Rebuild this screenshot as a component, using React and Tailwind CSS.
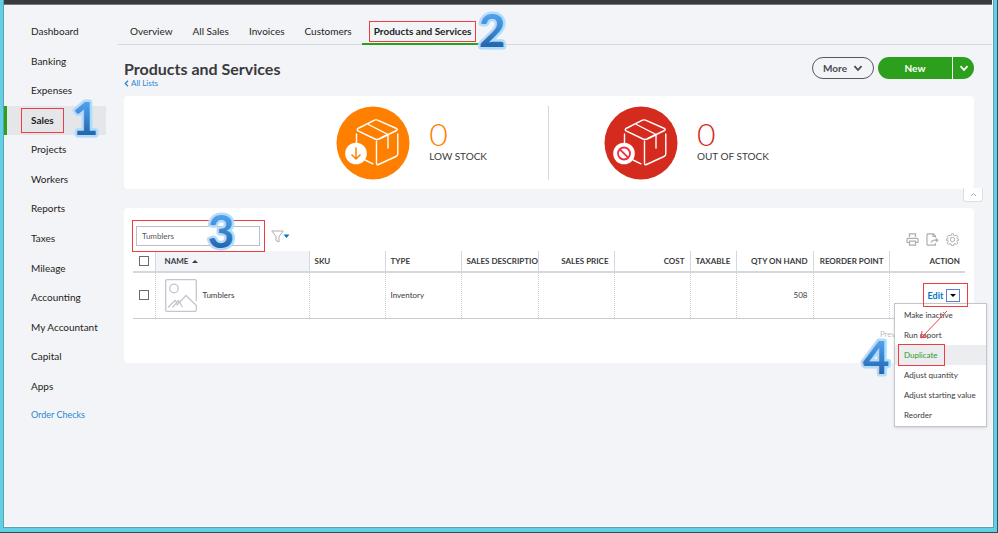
import React from "react";

const navItems = [
  "Dashboard", "Banking", "Expenses", "Sales", "Projects", "Workers", "Reports",
  "Taxes", "Mileage", "Accounting", "My Accountant", "Capital", "Apps",
];

const tabs = ["Overview", "All Sales", "Invoices", "Customers", "Products and Services"];

const columns = [
  { label: "NAME", width: "w-[154px]", align: "text-left", sorted: true },
  { label: "SKU", width: "w-[76px]", align: "text-left" },
  { label: "TYPE", width: "w-[76px]", align: "text-left", value: "Inventory" },
  { label: "SALES DESCRIPTION", width: "w-[77px]", align: "text-left" },
  { label: "SALES PRICE", width: "w-[76px]", align: "text-right" },
  { label: "COST", width: "w-[76px]", align: "text-right" },
  { label: "TAXABLE", width: "w-[46px]", align: "text-left" },
  { label: "QTY ON HAND", width: "w-[77px]", align: "text-right", value: "508" },
  { label: "REORDER POINT", width: "w-[76px]", align: "text-right" },
];

const menuItems = [
  "Make inactive", "Run report", "Duplicate", "Adjust quantity", "Adjust starting value", "Reorder",
];

function Step({ n, className }) {
  const id = "step-fill-" + n;
  return (
    <svg width="40" height="60" viewBox="0 0 40 60" className={"pointer-events-none absolute z-20 " + className}>
      <defs>
        <linearGradient id={id} x1="0" y1="0" x2="0" y2="1">
          <stop offset="0.25" stopColor="#4f9fec" />
          <stop offset="0.8" stopColor="#2467ae" />
        </linearGradient>
      </defs>
      <text
        x="20" y="46" textAnchor="middle" fontSize="46" fontWeight="700"
        fontFamily="Lato, sans-serif" fill={"url(#" + id + ")"}
        stroke="#b3dcfb" strokeWidth="5" strokeLinejoin="round" paintOrder="stroke"
      >
        {n}
      </text>
    </svg>
  );
}

function Mark({ className }) {
  return <span className={"pointer-events-none absolute z-10 border border-[#f23b3f] " + className} />;
}

function Chevron({ className }) {
  return (
    <svg width="10" height="7" viewBox="0 0 10 7" fill="none" stroke="currentColor" strokeWidth="1.8" className={className}>
      <path d="M1.5 1.2 5 5l3.500-3.800" />
    </svg>
  );
}

function StockIcon({ color, kind }) {
  return (
    <svg width="74" height="74" viewBox="0 0 74 74" fill="none" className="shrink-0">
      <circle cx="37" cy="37" r="36.500" fill={color} />
      <g stroke="#fff" strokeWidth="1.400" strokeLinejoin="round" strokeLinecap="round">
        <path d="M22 22.500 38.500 14.200q1.500-.7 3 0L60.500 22.500q1.500 1 0 2L43 33q-2 .8-4 0L22 24.800q-1.500-1-0-2.300Z" />
        <path d="M32.500 18.500 52 28.500v13.500M52 28.500 44 32.500" />
        <path d="M20.500 28v10M40.500 35v22q0 2.500 2 1.500L60 50.500q1.800-.8 1.800-2.500V28M29 54l8 3.800" />
      </g>
      <circle cx="20" cy="47.500" r="10.800" fill="#fff" />
      {kind === "low" ? (
        <path d="M20 41.500v11.500M15.500 48.500 20 53l4.500-4.500" stroke={color} strokeWidth="1.500" />
      ) : (
        <g stroke="#ee2f3f" strokeWidth="1.800">
          <circle cx="20" cy="47.500" r="6" />
          <path d="m15.800 43.300 8.400 8.400" />
        </g>
      )}
    </svg>
  );
}

function Stock({ color, textColor, kind, label }) {
  return (
    <div className="flex items-center gap-[19px]">
      <StockIcon color={color} kind={kind} />
      <div className="flex flex-col pb-[6px]">
        <span className={"text-[32px] leading-8 font-light " + textColor}>0</span>
        <span className="text-[10px] leading-3 text-[#393a3d]">{label}</span>
      </div>
    </div>
  );
}

function Sidebar() {
  return (
    <nav aria-label="Main" className="w-[102px] shrink-0 pt-3 text-[10px] text-[#1d1e20]">
      <ul className="grid h-[384px] auto-rows-fr">
        {navItems.map((item) => (
          <li key={item} className="flex">
            {item === "Sales" ? (
              <a href="#sales" aria-current="page" className="flex flex-1 items-center border-l-[3px] border-[#2ca01c] bg-[#e4e6ea] pl-6 font-bold">
                <span className="relative">
                  Sales
                  <Mark className="-inset-x-[10px] -inset-y-[5px]" />
                  <Step n="1" className="-top-6 left-[34px]" />
                </span>
              </a>
            ) : (
              <a href={"#" + item} className="flex flex-1 items-center pl-[27px]">{item}</a>
            )}
          </li>
        ))}
      </ul>
      <a href="#checks" className="flex h-7 items-center pl-[27px] text-[9px] text-[#2a87cf]">Order Checks</a>
    </nav>
  );
}

function Tabs() {
  return (
    <nav aria-label="Sales sections" className="flex h-10 border-b border-[#d4d7dc] pl-[2px] text-[10px] text-[#1d1e20]">
      {tabs.map((tab) =>
        tab === "Products and Services" ? (
          <a key={tab} href="#products" aria-current="page" className="relative -mb-px flex items-center border-b-2 border-[#2ca01c] px-3 pt-4 pb-[2px] font-bold">
            <span className="relative">
              {tab}
              <Mark className="-inset-x-[5px] -inset-y-[3px]" />
            </span>
            <Step n="2" className="-top-1 -right-[29px]" />
          </a>
        ) : (
          <a key={tab} href={"#" + tab} className="flex items-center px-[10px] pt-[14px] pb-px">{tab}</a>
        )
      )}
    </nav>
  );
}

function Toolbar() {
  return (
    <div className="flex items-start justify-between pt-[18px] pb-[5px]">
      <div className="flex items-center gap-[11px]">
        <div className="relative pl-[3px]">
          <input
            type="text" aria-label="Find products and services" defaultValue="Tumblers"
            className="block h-5 w-[124px] border border-[#babec5] bg-white px-[5px] text-[8px] text-[#55575b] outline-none"
          />
          <Mark className="-inset-y-[6px] -left-px -right-[5px]" />
          <Step n="3" className="-top-6 left-[68px]" />
        </div>
        <button type="button" aria-label="Filter" className="flex items-center">
          <svg width="19" height="13" viewBox="0 0 19 13" fill="none">
            <path d="M.8 1h11.400L8 6.500V12l-3-1.500v-4Z" stroke="#a9adb5" />
            <path d="M12.500 4.500h6l-3 3.500Z" fill="#0077c5" />
          </svg>
        </button>
      </div>
      <div className="flex gap-[7px] pt-[7px] pr-[6px] text-[#a9adb5]">
        <button type="button" aria-label="Print">
          <svg width="13" height="13" viewBox="0 0 13 13" fill="none" stroke="currentColor" strokeWidth="1.200">
            <path d="M3.500 4V.8h6V4M3 9.500H1V6.300q0-1 1-1h9q1 0 1 1v3.200h-2M3.500 8.200h6v4h-6Z" />
          </svg>
        </button>
        <button type="button" aria-label="Export">
          <svg width="13" height="13" viewBox="0 0 13 13" fill="none" stroke="currentColor" strokeWidth="1.200">
            <path d="M9.500 4.500V3L7.500.8H1.800Q1 .8 1 1.600v9.800q0 .8.800.8h7.700v-2M7 .8V3.500h2.500M5 9.500Q6 7.200 8.500 7.200h2" />
            <path d="m9.800 4.800 3 2.400-3 2.400Z" fill="currentColor" stroke="none" />
          </svg>
        </button>
        <button type="button" aria-label="Settings">
          <svg width="13" height="13" viewBox="0 0 24 24" fill="none" stroke="currentColor" strokeWidth="1.800">
            <circle cx="12" cy="12" r="4" />
            <path d="M10.200 1.500h3.600l.7 3 2 .8 2.600-1.600 2.600 2.600-1.600 2.600.8 2 3 .7v1.600l-3 .7-.8 2 1.600 2.700-2.600 2.600-2.600-1.600-2 .8-.7 3h-3.600l-.7-3-2-.8-2.600 1.600-2.600-2.600 1.600-2.700-.8-2-3-.7v-1.600l3-.7.8-2-1.600-2.600 2.600-2.600 2.600 1.600 2-.8Z" />
          </svg>
        </button>
      </div>
    </div>
  );
}

function ActionMenu() {
  return (
    <div className="absolute top-5 -right-[22px] z-10 w-[93px] border border-[#c3c6cc] bg-white py-px shadow-sm">
      <ul className="text-left text-[8px] text-[#393a3d]">
        {menuItems.map((item) => (
          <li key={item}>
            {item === "Duplicate" ? (
              <button type="button" className="relative flex h-5 w-full items-center bg-[#ecedf0] pl-[9px] text-[#2c9a1c]">
                {item}
                <Mark className="-inset-y-px left-[3px] w-[47px]" />
              </button>
            ) : (
              <button type="button" className="flex h-5 w-full items-center pl-[9px] whitespace-nowrap">{item}</button>
            )}
          </li>
        ))}
      </ul>
      <svg width="32" height="32" viewBox="0 0 32 32" fill="none" stroke="#f23b3f" className="pointer-events-none absolute top-[5px] left-[23px]">
        <path d="M29 2 3 29M4 22 3 29l7-2" />
      </svg>
      <Step n="4" className="-left-[39px] top-6" />
    </div>
  );
}

function ProductTable() {
  return (
    <table className="w-full table-fixed border-collapse text-[8px] text-[#393a3d]">
      <thead>
        <tr className="h-[21px] border-b-2 border-[#d4d7dc]">
          <th className="w-[22px] p-0">
            <input type="checkbox" aria-label="Select all" className="mx-auto block size-[10px] appearance-none border border-[#6b6c72] bg-white" />
          </th>
          {columns.map((c) => (
            <th key={c.label} className={"overflow-hidden border-l border-[#d4d7dc] py-0 font-bold whitespace-nowrap " + (c.sorted ? "bg-[#f3f4f8] pl-[9px] " : c.align === "text-right" ? "pr-[5px] " : "pl-[5px] ") + c.width + " " + c.align}>
              {c.label}
              {c.sorted && <span className="ml-1 inline-block border-x-[3px] border-b-[3px] border-x-transparent border-b-[#393a3d] align-middle" />}
            </th>
          ))}
          <th className="w-[76px] border-l border-[#d4d7dc] py-0 pr-[5px] text-right font-bold">ACTION</th>
        </tr>
      </thead>
      <tbody>
        <tr className="h-[46px] border-b border-[#c9ccd2]">
          <td className="p-0">
            <input type="checkbox" aria-label="Select Tumblers" className="mx-auto block size-[10px] appearance-none border border-[#6b6c72] bg-white" />
          </td>
          {columns.map((c) =>
            c.sorted ? (
              <td key={c.label} className="border-l border-dotted border-[#c9ccd2] py-0 pl-[9px]">
                <div className="flex items-center gap-[6px]">
                  <svg width="32" height="33" viewBox="0 0 32 33" fill="none" stroke="#c3c6cc" strokeWidth="1.300" aria-hidden="true">
                    <path d="M31.300 22V2q0-1.300-1.300-1.300H2Q.7.700.7 2v29q0 1.300 1.300 1.300h28q1.300 0 1.300-1.300v-4.500L21 16.500l-9.500 10" />
                    <circle cx="9" cy="9.500" r="4.300" />
                    <path d="m3 28.500 7-7 2.500 2.500M7.500 28.500l6-7 4 6.500" />
                  </svg>
                  Tumblers
                </div>
              </td>
            ) : (
              <td key={c.label} className={"border-l border-dotted border-[#c9ccd2] py-0 " + (c.align === "text-right" ? "pr-[5px] " : "pl-[5px] ") + c.align}>
                {c.value}
              </td>
            )
          )}
          <td className="border-l border-dotted border-[#c9ccd2] py-0 pr-0">
            <div className="relative ml-auto flex h-6 w-[42px] items-center justify-center gap-[3px]">
              <a href="#edit" className="text-[9px] font-bold text-[#0077c5]">Edit</a>
              <button type="button" aria-label="More actions" className="flex h-[13px] w-[14px] items-center justify-center border border-[#5b7fd0]">
                <span className="border-x-[3px] border-t-[3px] border-x-transparent border-t-black" />
              </button>
              <ActionMenu />
              <Mark className="inset-y-0 -right-[3px] left-0" />
            </div>
          </td>
        </tr>
      </tbody>
    </table>
  );
}

export default function App() {
  return (
    <div className="flex min-h-screen border-r border-b border-[#2b4f5c] bg-[#63d0e1] pr-[3px] pb-1 pl-[3px] font-[Lato,sans-serif]">
      <div className="flex min-w-0 flex-1 border-x border-b border-[#55a3b3]">
        <div className="flex min-w-0 flex-1 flex-col border-r border-b border-white bg-[#f3f4f8]">
          <header className="h-[5px] border-b border-[#77787c] bg-[#393a3d]" />
          <div className="flex flex-1 gap-3">
            <Sidebar />
            <main className="min-w-0 flex-1">
              <Tabs />
              <div className="pr-[18px] pl-[6px]">
                <div className="flex items-start justify-between pt-3 pb-[7px]">
                  <div className="pt-[3px]">
                    <h1 className="text-[16px] leading-[18px] font-bold text-[#393a3d]">Products and Services</h1>
                    <a href="#lists" className="flex items-center gap-[2px] text-[8px] leading-[11px] text-[#2a87cf]">
                      <svg width="5" height="7" viewBox="0 0 5 7" fill="none" stroke="currentColor" strokeWidth="1.300"><path d="M4 .8 1.300 3.500 4 6.200" /></svg>
                      All Lists
                    </a>
                  </div>
                  <div className="flex gap-1 text-[10px] font-bold">
                    <button type="button" className="flex h-[22px] w-[62px] items-center justify-center gap-[6px] rounded-full border border-[#55575b] text-[#4a4b4f]">
                      More
                      <Chevron />
                    </button>
                    <div className="flex h-[22px] gap-px text-white">
                      <button type="button" className="w-[74px] rounded-l-full bg-[#2ca01c]">New</button>
                      <button type="button" aria-label="More new options" className="flex w-[21px] items-center justify-center rounded-r-full bg-[#2ca01c]">
                        <Chevron />
                      </button>
                    </div>
                  </div>
                </div>

                <section className="relative grid grid-cols-2 rounded-sm bg-white pt-[10px] pb-[9px]">
                  <div className="flex justify-end border-r border-[#d4d7dc] pr-[61px]">
                    <Stock color="#ff8000" textColor="text-[#ff8000]" kind="low" label="LOW STOCK" />
                  </div>
                  <div className="pl-[55px]">
                    <Stock color="#d52b1e" textColor="text-[#d52b1e]" kind="out" label="OUT OF STOCK" />
                  </div>
                  <button type="button" aria-label="Collapse" className="absolute -right-[9px] -bottom-[13px] flex h-[14px] w-5 items-center justify-center rounded-b-sm border border-t-0 border-[#dcdfe4] bg-white text-[#a9adb5]">
                    <svg width="7" height="5" viewBox="0 0 7 5" fill="none" stroke="currentColor"><path d="m1 4 2.500-2.500L6 4" /></svg>
                  </button>
                </section>

                <section className="mt-[19px] rounded-sm bg-white px-[9px] pb-[23px]">
                  <Toolbar />
                  <ProductTable />
                  <div className="flex justify-end pt-[9px] pr-[55px] text-[8px] text-[#babec5]">
                    <button type="button" disabled>Previous</button>
                  </div>
                </section>
              </div>
            </main>
          </div>
        </div>
      </div>
    </div>
  );
}
